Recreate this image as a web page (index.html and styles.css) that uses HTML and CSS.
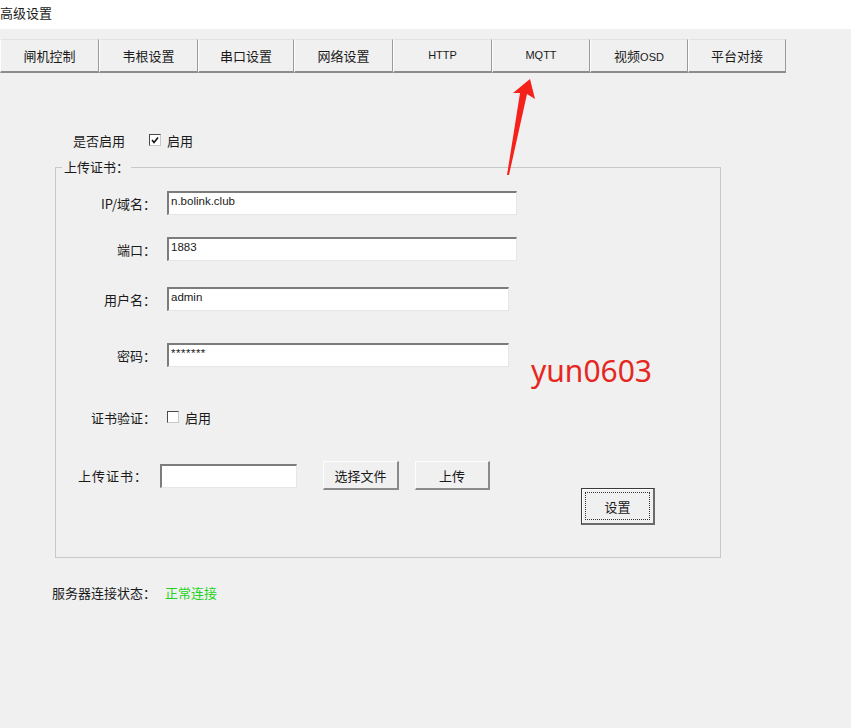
FILE: index.html
```html
<!DOCTYPE html>
<html lang="zh-CN">
<head>
    <meta charset="UTF-8">
    <title>高级设置</title>
    <link rel="stylesheet" href="styles.css">
</head>
<body>

<div class="titlebar">高级设置</div>

<div class="tabs">
    <div class="tab" style="width:99px">闸机控制</div>
    <div class="tab" style="width:99px">韦根设置</div>
    <div class="tab" style="width:96px">串口设置</div>
    <div class="tab" style="width:99px">网络设置</div>
    <div class="tab latin" style="width:99px">HTTP</div>
    <div class="tab latin" style="width:98px">MQTT</div>
    <div class="tab" style="width:98px">视频<span class="latin">OSD</span></div>
    <div class="tab" style="width:98px">平台对接</div>
</div>

<div class="content">
    <div class="enable-row">
        <span class="enable-label">是否启用</span>
        <span class="check checked"><svg width="8" height="8" viewBox="0 0 8 8"><path d="M1 4 L3 6.5 L7 1.5" fill="none" stroke="#111" stroke-width="1.6"/></svg></span>
        <span>启用</span>
    </div>

    <div class="group">
        <div class="legend">上传证书：</div>

        <div class="row row-ip">
            <label class="field-label">IP/域名：</label>
            <div class="input wide">n.bolink.club</div>
        </div>
        <div class="row row-port">
            <label class="field-label">端口：</label>
            <div class="input wide">1883</div>
        </div>
        <div class="row row-user">
            <label class="field-label">用户名：</label>
            <div class="input mid">admin</div>
        </div>
        <div class="row row-pwd">
            <label class="field-label">密码：</label>
            <div class="input mid pwd">*******</div>
        </div>
        <div class="row row-verify">
            <label class="field-label">证书验证：</label>
            <span class="check"></span>
            <span>启用</span>
        </div>
        <div class="row row-upload">
            <label class="upload-label">上传证书：</label>
            <div class="input small"></div>
            <button class="btn btn-file">选择文件</button>
            <button class="btn btn-upload">上传</button>
        </div>
        <div class="row row-submit">
            <button class="btn btn-submit"><span class="focus">设置</span></button>
        </div>
    </div>

    <div class="status">
        服务器连接状态：<span class="ok">正常连接</span>
    </div>
</div>

<!-- screenshot annotations -->
<div class="watermark">yun0603</div>
<svg class="arrow" width="851" height="200" viewBox="0 0 851 200">
    <polygon points="530,79 535,99 527,94 509,175 507,175 520,93 513,93" fill="#f5211b"/>
</svg>

</body>
</html>
```

FILE: styles.css
```css
body {
    margin: 0;
    background-color: #f0f0f0;
    font-family: "Noto Sans CJK SC", "Microsoft YaHei", sans-serif;
    font-size: 13px;
    color: #1a1a1a;
    position: relative;
    height: 728px;
    overflow: hidden;
}
.latin {
    font-family: "Liberation Sans", Arial, sans-serif;
    font-size: 11px;
}
.titlebar {
    background-color: #fff;
    height: 29px;
    line-height: 25px;
    font-size: 13px;
}
.tabs {
    display: flex;
    margin-top: 10px;
    height: 34px;
}
.tab {
    box-sizing: border-box;
    height: 34px;
    line-height: 31px;
    text-align: center;
    font-size: 13px;
    border-top: 1px solid #e2e2e2;
    border-left: 1px solid #fdfdfd;
    border-right: 1px solid #9a9a9a;
    border-bottom: 2px solid #8c8c8c;
    background-color: #f0f0f0;
}
.tab.latin {
    font-size: 11px;
}
.content {
    padding-left: 55px;
}
.enable-row {
    display: flex;
    align-items: center;
    height: 18px;
    margin-top: 58px;
}
.enable-label {
    margin-left: 18px;
    width: 76px;
}
.check {
    box-sizing: border-box;
    width: 12px;
    height: 12px;
    background-color: #fff;
    border: 1px solid #4a4a4a;
    border-right-color: #c8c8c8;
    border-bottom-color: #c8c8c8;
    margin-right: 6px;
    display: flex;
    align-items: center;
    justify-content: center;
}
.group {
    box-sizing: border-box;
    width: 666px;
    height: 391px;
    margin-top: 18px;
    border: 1px solid #c9c9c9;
}
.legend {
    width: fit-content;
    margin: -10px 0 0 6px;
    padding: 0 2px;
    line-height: 18px;
    background-color: #f0f0f0;
}
.row {
    display: flex;
    align-items: center;
}
.field-label {
    width: 100px;
    text-align: right;
    margin-right: 11px;
}
.input {
    box-sizing: border-box;
    height: 24px;
    background-color: #fff;
    border: 2px solid #7c7c7c;
    border-right: 1px solid #e6e6e6;
    border-bottom: 1px solid #e6e6e6;
    padding: 1px 2px;
    font-family: "Liberation Sans", Arial, sans-serif;
    font-size: 11.5px;
    line-height: 14px;
    align-self: flex-start;
}
.input.wide {
    width: 350px;
}
.input.mid {
    width: 342px;
}
.input.small {
    width: 137px;
    align-self: center;
}
.input.pwd {
    letter-spacing: 0.5px;
}
.row-ip {
    margin-top: 15px;
}
.row-port {
    margin-top: 22px;
}
.row-user {
    margin-top: 26px;
}
.row-pwd {
    margin-top: 32px;
}
.row-verify {
    height: 24px;
    margin-top: 38px;
}
.row-upload {
    height: 29px;
    margin-top: 32px;
}
.upload-label {
    margin-left: 22px;
    width: 82px;
    letter-spacing: 1px;
}
.btn {
    box-sizing: border-box;
    height: 29px;
    font-family: inherit;
    font-size: 13px;
    color: #1a1a1a;
    background-color: #f0f0f0;
    border: 1px solid #fdfdfd;
    border-right: 2px solid #8a8a8a;
    border-bottom: 2px solid #8a8a8a;
    padding: 0;
}
.btn-file {
    width: 76px;
    margin-left: 26px;
}
.btn-upload {
    width: 75px;
    margin-left: 16px;
}
.row-submit {
    margin-top: -2px;
    padding-left: 525px;
}
.btn-submit {
    width: 74px;
    height: 37px;
    border: 1px solid #3a3a3a;
    border-right: 2px solid #6a6a6a;
    border-bottom: 2px solid #6a6a6a;
    box-shadow: inset 1px 1px 0 #fff;
    padding: 3px;
}
.btn-submit .focus {
    display: flex;
    align-items: center;
    justify-content: center;
    height: 100%;
    border: 1px dotted #333;
    box-sizing: border-box;
}
.status {
    margin-top: 26px;
    margin-left: -3px;
    line-height: 18px;
}
.ok {
    color: #22d322;
    margin-left: 9px;
}
.watermark {
    position: absolute;
    left: 531px;
    top: 350px;
    font-family: "Noto Sans", sans-serif;
    font-size: 30px;
    color: #e5281f;
}
.arrow {
    position: absolute;
    left: 0;
    top: 0;
}
```
